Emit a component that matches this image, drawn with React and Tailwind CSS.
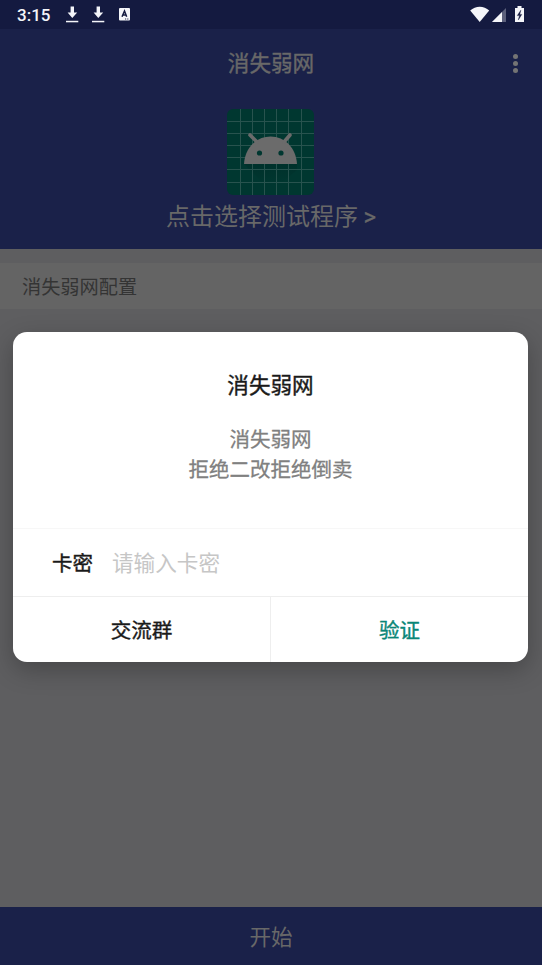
import React from "react";

const gridLines = [13, 25, 37, 49, 61, 74];

function DownloadIcon() {
  return (
    <svg width="13" height="17" viewBox="0 0 13 17" fill="#f4f5f9">
      <path d="M4.600 .6h3.400v6h3.200L6.300 12 1.600 6.600h3z" />
      <rect x="0" y="14.800" width="12.300" height="1.500" />
    </svg>
  );
}

function LetterIcon() {
  return (
    <svg width="11" height="13" viewBox="0 0 11 13">
      <rect width="11" height="12.6" rx="1" fill="#f4f5f9" />
      <path d="M3 8.800 5.500 3l2.200 5.800M3.800 7h3.200" fill="none" stroke="#141a40" strokeWidth="1.500" />
      <path d="M6 11h1.2M8.2 11h1.2" stroke="#141a40" strokeWidth="0.9" />
    </svg>
  );
}

function StatusBar() {
  return (
    <div className="flex h-[29px] shrink-0 items-start bg-[#141a40] text-[#f4f5f9]">
      <span className="ml-[17px] mt-[3px] w-[49px] text-[17px] leading-[24px] font-medium font-['Roboto',sans-serif]">3:15</span>
      <div className="mt-[6px] flex"><DownloadIcon /></div>
      <div className="ml-[13px] mt-[6px] flex"><DownloadIcon /></div>
      <div className="ml-[14px] mt-[8px] flex"><LetterIcon /></div>
      <svg className="ml-auto mr-[17px] mt-[6px]" width="55" height="17" viewBox="0 0 55 17">
        <path d="M.2 4.5C5.500-.6 14-.6 19.200 4.500L9.700 16z" fill="#f4f5f9" />
        <path d="M36 2v14H22z" fill="#5c607c" />
        <path d="M32 5.900V16H22z" fill="#f4f5f9" />
        <path d="M47.500 0h4v2H54v14h-9V2h2.500z" fill="#f4f5f9" />
        <path d="M50.800 4.200 47.300 9.600h2.200L48.300 14l3.500-5.600h-2z" fill="#141a40" stroke="#141a40" strokeWidth=".4" />
      </svg>
    </div>
  );
}

function AppLogo() {
  return (
    <svg width="87" height="86" viewBox="0 0 87 86">
      <defs>
        <linearGradient id="logoShadow" x1="0" y1="0" x2="0" y2="1">
          <stop offset="0" stopColor="#002b26" />
          <stop offset="1" stopColor="#003730" />
        </linearGradient>
      </defs>
      <rect width="87" height="86" rx="6" fill="#003730" />
      <path d="M17 55h53v6L52 76H38z" fill="url(#logoShadow)" opacity=".5" />
      <g stroke="#28534e" strokeWidth="1">
        {gridLines.map((p) => (
          <g key={p}>
            <path d={`M${p + 0.5} 0V86`} />
            <path d={`M0 ${p - 0.5}H87`} />
          </g>
        ))}
      </g>
      <path d="M17 55c1-16 12-27.500 26.500-27.500S69 39 70 55z" fill="#6b6b6b" />
      <path d="M23 26 30 33M63 26 57 33" stroke="#6b6b6b" strokeWidth="3.600" strokeLinecap="round" />
      <circle cx="32.500" cy="44" r="2.600" fill="#003730" />
      <circle cx="54" cy="44" r="2.600" fill="#003730" />
    </svg>
  );
}

function Dialog() {
  return (
    <div className="absolute left-[13px] top-[332px] flex h-[330px] w-[515px] flex-col rounded-[14px] bg-white text-[#1a1a1a] shadow-[0_8px_24px_rgba(0,0,0,0.25)]">
      <div className="flex h-[196px] flex-col items-center">
        <h2 className="mt-[37px] text-[21.600px] leading-[30px] [-webkit-text-stroke:0.4px]">消失弱网</h2>
        <p className="mt-[24px] text-center text-[20.500px] leading-[30px] text-[#808080] [-webkit-text-stroke:0.3px]">
          消失弱网<br />拒绝二改拒绝倒卖
        </p>
      </div>
      <div className="flex h-[68px] items-center border-t border-[#f7f7f7] pl-[39px]">
        <span className="text-[20.500px] [-webkit-text-stroke:0.4px]">卡密</span>
        <span className="ml-[19px] text-[21.600px] text-[#c6c6c6]">请输入卡密</span>
      </div>
      <div className="flex h-[66px] border-t border-[#eeeeee] text-[20.500px]">
        <button className="w-[258px] border-r border-[#eeeeee] [-webkit-text-stroke:0.4px]">交流群</button>
        <button className="flex-1 text-[#098677] [-webkit-text-stroke:0.4px]">验证</button>
      </div>
    </div>
  );
}

export default function App() {
  return (
    <div className="relative flex h-[965px] w-[542px] flex-col overflow-hidden bg-[#5e5e60] font-['Noto_Sans_CJK_SC',sans-serif]">
      <StatusBar />
      <header className="flex h-[220px] shrink-0 flex-col items-center bg-[#1a2149] text-[#686868]">
        <div className="grid h-[68px] w-full grid-cols-[1fr_auto_1fr] items-center">
          <h1 className="col-start-2 mb-[2px] text-[21.600px] leading-[30px] [-webkit-text-stroke:0.4px]">消失弱网</h1>
          <div className="mr-[24px] flex flex-col gap-[2px] justify-self-end">
            <i className="size-[5px] rounded-full bg-[#747474]" />
            <i className="size-[5px] rounded-full bg-[#747474]" />
            <i className="size-[5px] rounded-full bg-[#747474]" />
          </div>
        </div>
        <div className="mr-px mt-[12px] h-[86px]"><AppLogo /></div>
        <p className="mt-[2px] text-[24px] leading-[36px]">点击选择测试程序 <span className="font-['Roboto',sans-serif] [-webkit-text-stroke:0.3px]">&gt;</span></p>
      </header>
      <section className="mt-[14px] flex h-[46px] shrink-0 items-center bg-[#646464] pl-[22px] text-[19.200px] text-[#343434]">消失弱网配置</section>
      <button className="mt-auto h-[58px] shrink-0 bg-[#1a2149] text-[21.600px] text-[#686868]">开始</button>
      <Dialog />
    </div>
  );
}
